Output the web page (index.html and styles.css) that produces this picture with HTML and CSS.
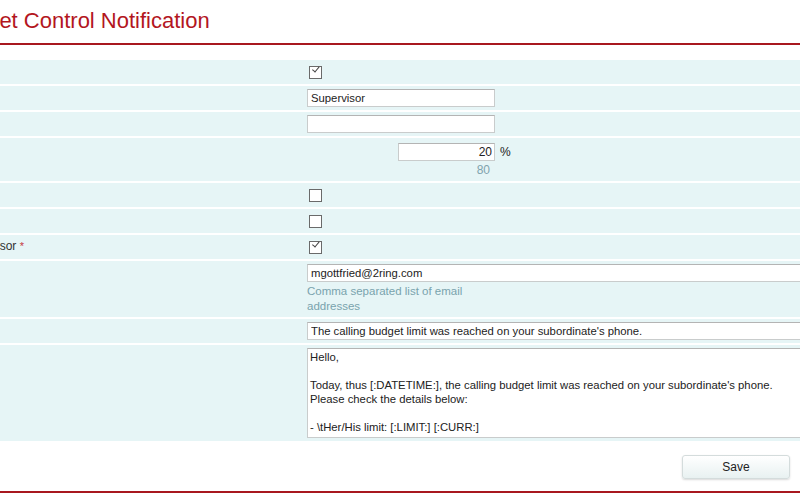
FILE: index.html
```html
<!DOCTYPE html>
<html lang="en">
<head>
    <meta charset="UTF-8">
    <title>Budget Control Notification</title>
<link rel="stylesheet" href="styles.css">
</head>
<body>
    <div class="page">
        <h1 class="page-title">Budget Control Notification</h1>

        <div class="form">
            <div class="row">
                <div class="label"></div>
                <div class="value"><span class="check checked"></span></div>
            </div>
            <div class="row">
                <div class="label"></div>
                <div class="value"><input class="field" type="text" value="Supervisor"></div>
            </div>
            <div class="row">
                <div class="label"></div>
                <div class="value"><input class="field" type="text" value=""></div>
            </div>
            <div class="row">
                <div class="label"></div>
                <div class="value pct">
                    <div class="pct-box">
                        <input class="field num" type="text" value="20">
                        <div class="pct-amount">80</div>
                    </div>
                    <span class="pct-sign">%</span>
                </div>
            </div>
            <div class="row">
                <div class="label"></div>
                <div class="value"><span class="check"></span></div>
            </div>
            <div class="row">
                <div class="label"></div>
                <div class="value"><span class="check"></span></div>
            </div>
            <div class="row">
                <div class="label">Notify supervisor <span class="req">*</span></div>
                <div class="value"><span class="check checked"></span></div>
            </div>
            <div class="row">
                <div class="label"></div>
                <div class="value">
                    <input class="field wide" type="text" value="mgottfried@2ring.com">
                    <div class="hint">Comma separated list of email addresses</div>
                </div>
            </div>
            <div class="row">
                <div class="label"></div>
                <div class="value"><input class="field wide" type="text" value="The calling budget limit was reached on your subordinate's phone."></div>
            </div>
            <div class="row">
                <div class="label"></div>
                <div class="value"><textarea class="field wide body-text">Hello,

Today, thus [:DATETIME:], the calling budget limit was reached on your subordinate's phone.
Please check the details below:

- \tHer/His limit: [:LIMIT:] [:CURR:]</textarea></div>
            </div>
        </div>

        <div class="actions">
            <button class="save-button">Save</button>
        </div>
    </div>
</body>
</html>
```

FILE: styles.css
```css
body {
    margin: 0;
    overflow: hidden;
    background: white;
    font-family: "Liberation Sans", Arial, sans-serif;
    color: #333;
}

/* the view is scrolled a bit to the right */
.page {
    width: 900px;
    margin-left: -100px;
}

.page-title {
    margin: 0;
    padding: 8px 0 9px 48px;
    font-size: 22px;
    line-height: 26px;
    font-weight: normal;
    color: #b3161e;
    border-bottom: 2px solid #a8181f;
}

.form {
    margin-top: 15px;
}

.row {
    display: grid;
    grid-template-columns: 407px 1fr;
    background: #e6f5f6;
    padding: 3px 0;
    margin-bottom: 2px;
}

.label {
    padding-left: 27px;
    padding-top: 1px;
    font-size: 12px;
    line-height: 15px;
    white-space: nowrap;
}

.req {
    color: #c5393e;
    font-size: 11px;
}

.value {
    min-height: 18px;
    display: flex;
    flex-direction: column;
    justify-content: center;
    align-items: flex-start;
}

.field {
    box-sizing: border-box;
    width: 188px;
    height: 18px;
    margin: 0;
    padding: 0 4px 0 3px;
    border: 1px solid #c9cccc;
    border-top-color: #b4b4b4;
    background: white;
    font-family: "Liberation Sans", Arial, sans-serif;
    font-size: 11.3px;
    color: #222;
    outline: none;
}

.wide {
    width: 560px;
}

.num {
    width: 97px;
    text-align: right;
    padding-right: 2px;
    font-size: 12px;
}

.body-text {
    height: 90px;
    padding: 1px 2px;
    line-height: 14px;
    resize: none;
    overflow: hidden;
}

.hint {
    margin-top: 2px;
    width: 190px;
    font-size: 11.5px;
    line-height: 15px;
    color: #79a3ad;
}

.pct {
    flex-direction: row;
    justify-content: flex-start;
    align-items: flex-start;
}

.pct-box {
    width: 188px;
    display: flex;
    flex-direction: column;
    align-items: flex-end;
    padding-top: 2px;
}

.pct-amount {
    padding-right: 5px;
    margin-top: 2px;
    font-size: 12px;
    line-height: 15px;
    color: #7fa3ad;
}

.pct-sign {
    margin-left: 5px;
    padding-top: 4px;
    font-size: 12px;
    color: #222;
}

.check {
    display: block;
    box-sizing: border-box;
    width: 13px;
    height: 13px;
    margin-left: 2px;
    border: 1px solid #6a6a6a;
    background: white;
    position: relative;
}

.check.checked::after {
    content: "";
    position: absolute;
    left: 2px;
    top: 1px;
    width: 6px;
    height: 3px;
    border-left: 1px solid #444;
    border-bottom: 1px solid #444;
    transform: translate(0, 2px) rotate(-50deg);
    transform-origin: left top;
}

.actions {
    display: flex;
    justify-content: flex-end;
    padding: 12px 10px;
    border-bottom: 2px solid #a8181f;
}

.save-button {
    width: 108px;
    height: 24px;
    border: 1px solid #d4dcdc;
    border-radius: 3px;
    background: linear-gradient(#ffffff, #e8f1f1);
    box-shadow: 0 1px 2px rgba(0, 0, 0, 0.15);
    font-family: "Liberation Sans", Arial, sans-serif;
    font-size: 12px;
    color: #222;
    cursor: pointer;
}
```
